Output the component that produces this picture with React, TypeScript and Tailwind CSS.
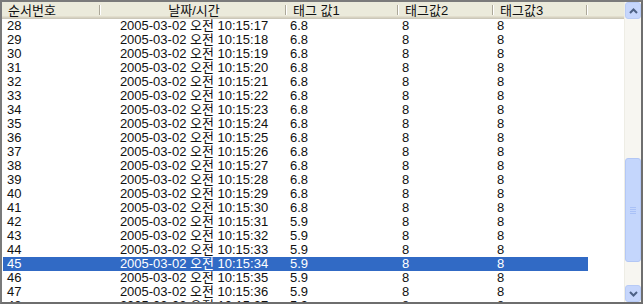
import React from "react";

const rows = Array.from({ length: 21 }, (_, i) => {
  const n = 28 + i;
  const sec = 17 + i;
  return {
    n,
    time: `2005-03-02 오전 10:15:${String(sec).padStart(2, "0")}`,
    v1: n <= 41 ? "6.8" : "5.9",
    v2: "8",
    v3: "8",
  };
});

function HeaderCell({ w, children, center }: { w: string; children?: React.ReactNode; center?: boolean }) {
  return (
    <div className={`${w} relative h-full flex items-center shrink-0 ${center ? "justify-center" : "pl-[6px]"}`}>
      <span className="whitespace-nowrap">{children}</span>
      <div className="absolute right-0 top-[3px] bottom-[4px] w-[2px] flex">
        <div className="w-[1px] bg-[#ACA899]" />
        <div className="w-[1px] bg-white" />
      </div>
    </div>
  );
}

function Chevron({ up }: { up?: boolean }) {
  return (
    <svg width="9" height="6" viewBox="0 0 9 6">
      <polyline
        points={up ? "1,5 4.5,1.5 8,5" : "1,1 4.5,4.5 8,1"}
        fill="none"
        stroke="#4D6185"
        strokeWidth="2"
      />
    </svg>
  );
}

export default function App() {
  return (
    <div
      className="w-[643px] h-[304px] bg-white border-[2px] border-t-[#7A7A7A] border-l-[#7A7A7A] border-r-[#6E6E6E] border-b-[#6E6E6E] flex text-[13px] text-[#111] overflow-hidden"
      style={{ fontFamily: '"Liberation Sans", "Noto Sans CJK KR", sans-serif' }}
    >
      <div className="flex-1 flex flex-col overflow-hidden">
        <div className="h-[17px] shrink-0 flex bg-[#EBEADB] shadow-[inset_0_-1px_0_#CBC7B8,inset_0_-2px_0_#D6D2C2,inset_0_-3px_0_#E2DECD] leading-[14px]">
          <HeaderCell w="w-[99px]">순서번호</HeaderCell>
          <HeaderCell w="w-[186px]" center>날짜/시간</HeaderCell>
          <HeaderCell w="w-[112px]">태그 값1</HeaderCell>
          <HeaderCell w="w-[95px]">태그값2</HeaderCell>
          <HeaderCell w="w-[94px]">태그값3</HeaderCell>
          <div className="flex-1" />
        </div>
        <div className="flex flex-col">
          {rows.map((r) => {
            const sel = r.n === 45;
            return (
              <div
                key={r.n}
                className={`h-[14px] shrink-0 flex leading-[14px] w-[585px] ml-[1px] ${sel ? "bg-[#316AC5] text-white" : ""}`}
              >
                <div className="w-[98px] pl-[4px] shrink-0">{r.n}</div>
                <div className="w-[186px] text-center shrink-0 whitespace-nowrap">{r.time}</div>
                <div className="w-[112px] pl-[3px] shrink-0">{r.v1}</div>
                <div className="w-[95px] pl-[3px] shrink-0">{r.v2}</div>
                <div className="w-[94px] pl-[3px] shrink-0">{r.v3}</div>
              </div>
            );
          })}
        </div>
      </div>
      <div className="w-[17px] shrink-0 flex flex-col bg-[#F7F6F1] border-l border-[#EEEDE5]">
        <div className="h-[17px] shrink-0 rounded-[3px] bg-[#C6D6FC] border border-[#B8CBF6] flex items-center justify-center">
          <Chevron up />
        </div>
        <div className="flex-1 flex flex-col">
          <div className="mt-[139px] h-[104px] rounded-[3px] bg-[#C4D6FC] border border-[#B3C7F5] flex flex-col items-center justify-center gap-[1px]">
            <div className="w-[6px] h-[1px] bg-[#A9C1F7]" />
            <div className="w-[6px] h-[1px] bg-[#A9C1F7]" />
            <div className="w-[6px] h-[1px] bg-[#A9C1F7]" />
            <div className="w-[6px] h-[1px] bg-[#A9C1F7]" />
          </div>
        </div>
        <div className="h-[17px] shrink-0 rounded-[3px] bg-[#C6D6FC] border border-[#B8CBF6] flex items-center justify-center">
          <Chevron />
        </div>
      </div>
    </div>
  );
}
